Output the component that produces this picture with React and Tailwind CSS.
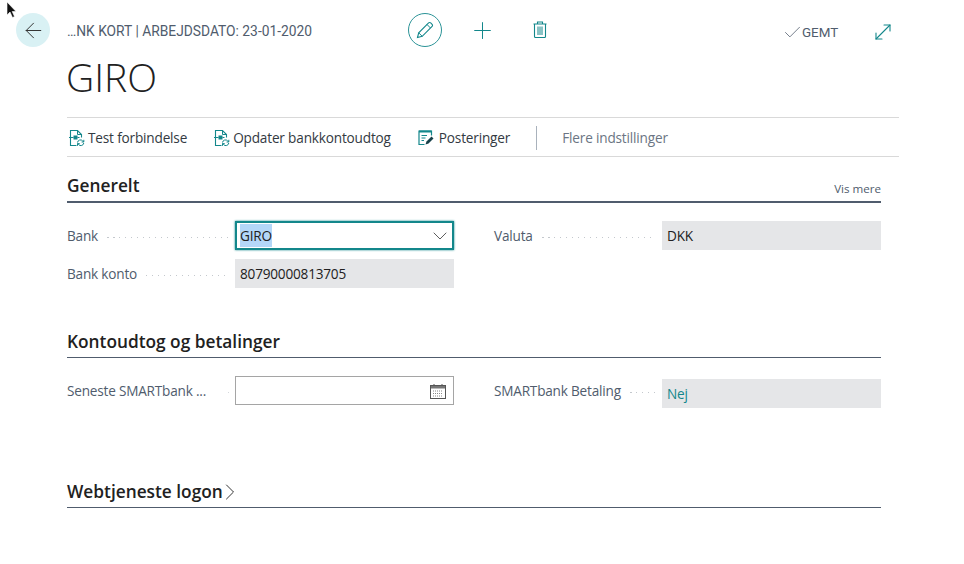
import React from 'react';
import { ArrowLeft, Plus, Check, ChevronDown, ChevronRight, MoveDiagonal } from 'lucide-react';

const font = { body: "font-['Open_Sans',sans-serif]", head: "font-['Roboto',sans-serif]" };

const DocIcon = () => (
  <svg width="16" height="18" viewBox="0 0 16 18" fill="none" className="shrink-0">
    <path d="M7.5 16.5H1.5V1.5H8.5L12.5 5.5V8.5" stroke="#13878b" strokeWidth="1.1" />
    <path d="M8.5 1.5V5.5H12.5" stroke="#13878b" strokeWidth="1" />
    <rect x="4.5" y="6.5" width="4" height="4" fill="#13878b" />
    <path d="M0 8.5H4.5M8.5 8.5H10.5" stroke="#13878b" strokeWidth="1" />
    <path d="M8.5 13.5a3 3 0 0 1 5.2-1.6l1 1M14.8 14a3 3 0 0 1-5.2 1.6l-1-1M14.8 10.8v2.2h-2.2M8.5 16.8v-2.2h2.2" stroke="#13878b" strokeWidth="1" />
  </svg>
);

const EntriesIcon = () => (
  <svg width="16" height="17" viewBox="0 0 16 17" fill="none" className="shrink-0">
    <path d="M13.5 6.5V2H1V15.5H6.5" stroke="#13878b" strokeWidth="1.2" />
    <path d="M1 1.5H13.5V3.5H1Z" fill="#13878b" />
    <path d="M3.5 6.5H9M3.5 9H7.5M3.5 11.5H6" stroke="#13878b" strokeWidth="1" />
    <path d="M7.5 15.5L8.5 12.5L13.5 7.5L15.5 9.5L10.5 14.5Z" fill="#16404a" />
  </svg>
);

const PencilIcon = () => (
  <svg width="18" height="18" viewBox="0 0 18 18" fill="none">
    <path d="M1.5 16.5L2.7 11.8L12.6 1.9C13.2 1.3 14.1 1.3 14.7 1.9L16.1 3.3C16.7 3.9 16.7 4.8 16.1 5.4L6.2 15.3Z" stroke="#13878b" strokeWidth="1.1" />
    <path d="M11 3.5L14.5 7M2.7 11.8L6.2 15.3" stroke="#13878b" strokeWidth="1" />
  </svg>
);

const TrashIcon = () => (
  <svg width="14" height="17" viewBox="0 0 14 17" fill="none">
    <path d="M0.5 3H13.5M4.5 3V1H9.5V3" stroke="#13878b" strokeWidth="1.1" />
    <path d="M1.5 3V15.5C1.5 16 2 16.5 2.5 16.5H11.5C12 16.5 12.5 16 12.5 15.5V3" stroke="#13878b" strokeWidth="1.1" />
    <path d="M5 5.5V14M7 5.5V14M9 5.5V14" stroke="#13878b" strokeWidth="1" />
  </svg>
);

const CalendarIcon = () => (
  <svg width="16" height="16" viewBox="0 0 16 16" fill="none">
    <rect x="0.5" y="2.5" width="15" height="13" stroke="#555" />
    <rect x="1" y="3" width="14" height="2.5" fill="#777" />
    <path d="M4 1V3M12 1V3" stroke="#555" />
    <path d="M3 8H13M3 10.5H13M3 13H13" stroke="#888" strokeDasharray="1 1" />
  </svg>
);

const Action = ({ icon, label, gap = 'gap-[3px]' }) => (
  <div className={`flex items-center ${gap} text-[13.6px] tracking-[-0.17px] text-[#333a42]`}>
    {icon}
    <span>{label}</span>
  </div>
);

const Label = ({ text, dots = true }) => (
  <div className="w-[168px] h-[29px] pt-[2px] shrink-0 flex items-center gap-[9px] pr-[6px] text-[13.6px] tracking-[-0.2px] text-[#505c6d]">
    <span className="whitespace-nowrap">{text}</span>
    {dots ? (
      <span className="flex-1 h-[1.5px] translate-y-[1px] bg-[repeating-linear-gradient(90deg,#c4c8cd_0_1.5px,transparent_1.5px_6px)]" />
    ) : (
      <span className="ml-auto w-[1.5px] h-[1.5px] translate-y-[1px] bg-[#d5d8dc]" />
    )}
  </div>
);

const Section = ({ title, right, line, className, children }) => (
  <section className={className}>
    <div className={`flex items-center justify-between h-[32px] ${line}`}>
      {title}
      {right}
    </div>
    {children}
  </section>
);

const Heading = ({ children }) => (
  <h2 className="text-[17.3px] font-semibold text-[#212121] leading-[24px]">{children}</h2>
);

const Value = ({ children, className = 'text-[#212121]' }) => (
  <div className={`flex items-center w-[219px] h-[29px] pt-[2px] bg-[#e5e6e8] px-[5px] text-[13.6px] tracking-[-0.2px] ${className}`}>{children}</div>
);

export default function App() {
  return (
    <div className={`relative w-[964px] h-[564px] bg-white overflow-hidden ${font.body}`}>
      {/* mouse pointer */}
      <svg width="12" height="18" viewBox="0 0 12 18" className="absolute left-[6px] top-[1px]">
        <path d="M1 1V14L4 11L6.5 16.5L8.5 15.5L6.2 10.5H10Z" fill="#111" stroke="#fff" strokeWidth="0.6" />
      </svg>

      <header className="flex items-center h-[34px] mt-[13px] pl-[16px]">
        <div className="w-[34px] h-[34px] rounded-full bg-[#d9f1f4] flex items-center justify-center">
          <ArrowLeft size={25} strokeWidth={0.95} className="text-[#333]" />
        </div>
        <div className={`ml-[17px] w-[341px] pt-[2px] text-[13.8px] font-normal text-[#505c6d] ${font.head}`}>
          …NK KORT | ARBEJDSDATO: 23-01-2020
        </div>
        <div className="w-[34px] h-[34px] rounded-full border-[1.5px] border-[#2b9397] flex items-center justify-center">
          <PencilIcon />
        </div>
        <Plus size={27} strokeWidth={0.9} className="ml-[27px] text-[#13878b]" />
        <div className="ml-[37px] -translate-y-[1px]">
          <TrashIcon />
        </div>
        <div className={`ml-[235px] flex items-center text-[13.4px] font-normal text-[#505c6d] translate-y-[3px] ${font.head}`}>
          <Check size={21} strokeWidth={0.9} className="-mr-[1px] -translate-y-[1px]" />
          <span>GEMT</span>
        </div>
        <MoveDiagonal size={24} strokeWidth={1.1} className="ml-[33px] translate-y-[2px] text-[#13878b]" />
      </header>

      <h1 className="ml-[66px] mt-[2px] text-[39px] leading-[56px] font-light text-[#212121]">GIRO</h1>

      <nav className="ml-[67px] mr-[65px] mt-[12px] h-[40px] pt-[2px] border-y border-[#d9d9d9] flex items-center pl-[2px]">
        <Action icon={<DocIcon />} label="Test forbindelse" />
        <div className="ml-[27px]">
          <Action icon={<DocIcon />} label="Opdater bankkontoudtog" />
        </div>
        <div className="ml-[27px]">
          <Action icon={<EntriesIcon />} label="Posteringer" gap="gap-[5px]" />
        </div>
        <div className="ml-[26px] h-[24px] border-l border-[#a9b2bc]" />
        <span className="ml-[25px] text-[13.6px] tracking-[-0.17px] text-[#6b7583]">Flere indstillinger</span>
      </nav>

      <main className="ml-[67px] w-[814px]">
        <Section
          className="mt-[14px]"
          line="border-b-2 border-[#505c6d]"
          title={<Heading>Generelt</Heading>}
          right={<span className="text-[11.6px] text-[#505c6d] translate-y-[3px]">Vis mere</span>}
        >
          <div className="grid grid-cols-2 gap-x-[40px] mt-[18px]">
            <div className="flex flex-col gap-[9px]">
              <div className="flex items-center h-[29px]">
                <Label text="Bank" />
                <div className="flex items-center justify-between w-[219px] h-[29px] border-2 border-[#13878b] shadow-[0_0_2px_#13878b] pl-[3px] text-[13.6px] tracking-[-0.2px] text-[#212121]">
                  <span className="bg-[#b4d7f8] leading-[23px]">GIRO</span>
                  <ChevronDown size={24} strokeWidth={0.8} className="text-[#333]" />
                </div>
              </div>
              <div className="flex items-center h-[29px]">
                <Label text="Bank konto" />
                <Value>80790000813705</Value>
              </div>
            </div>
            <div className="flex items-start h-[29px]">
              <Label text="Valuta" />
              <Value>DKK</Value>
            </div>
          </div>
        </Section>

        <Section
          className="mt-[38px]"
          line="border-b border-[#505c6d]"
          title={<Heading>Kontoudtog og betalinger</Heading>}
        >
          <div className="grid grid-cols-2 gap-x-[40px] mt-[18px]">
            <div className="flex items-center h-[29px]">
              <Label text="Seneste SMARTbank ..." dots={false} />
              <div className="flex items-center justify-end w-[219px] h-[29px] border border-[#a5a5a5] pr-[7px]">
                <CalendarIcon />
              </div>
            </div>
            <div className="flex items-start h-[32px]">
              <Label text="SMARTbank Betaling" />
              <div className="mt-[3px]">
                <Value className="text-[#13878b]">Nej</Value>
              </div>
            </div>
          </div>
        </Section>

        <Section
          className="mt-[68px]"
          line="border-b border-[#505c6d]"
          title={
            <div className="flex items-center">
              <Heading>Webtjeneste logon</Heading>
              <ChevronRight size={28} strokeWidth={0.85} className="text-[#333] -ml-[7px]" />
            </div>
          }
        />
      </main>
    </div>
  );
}
